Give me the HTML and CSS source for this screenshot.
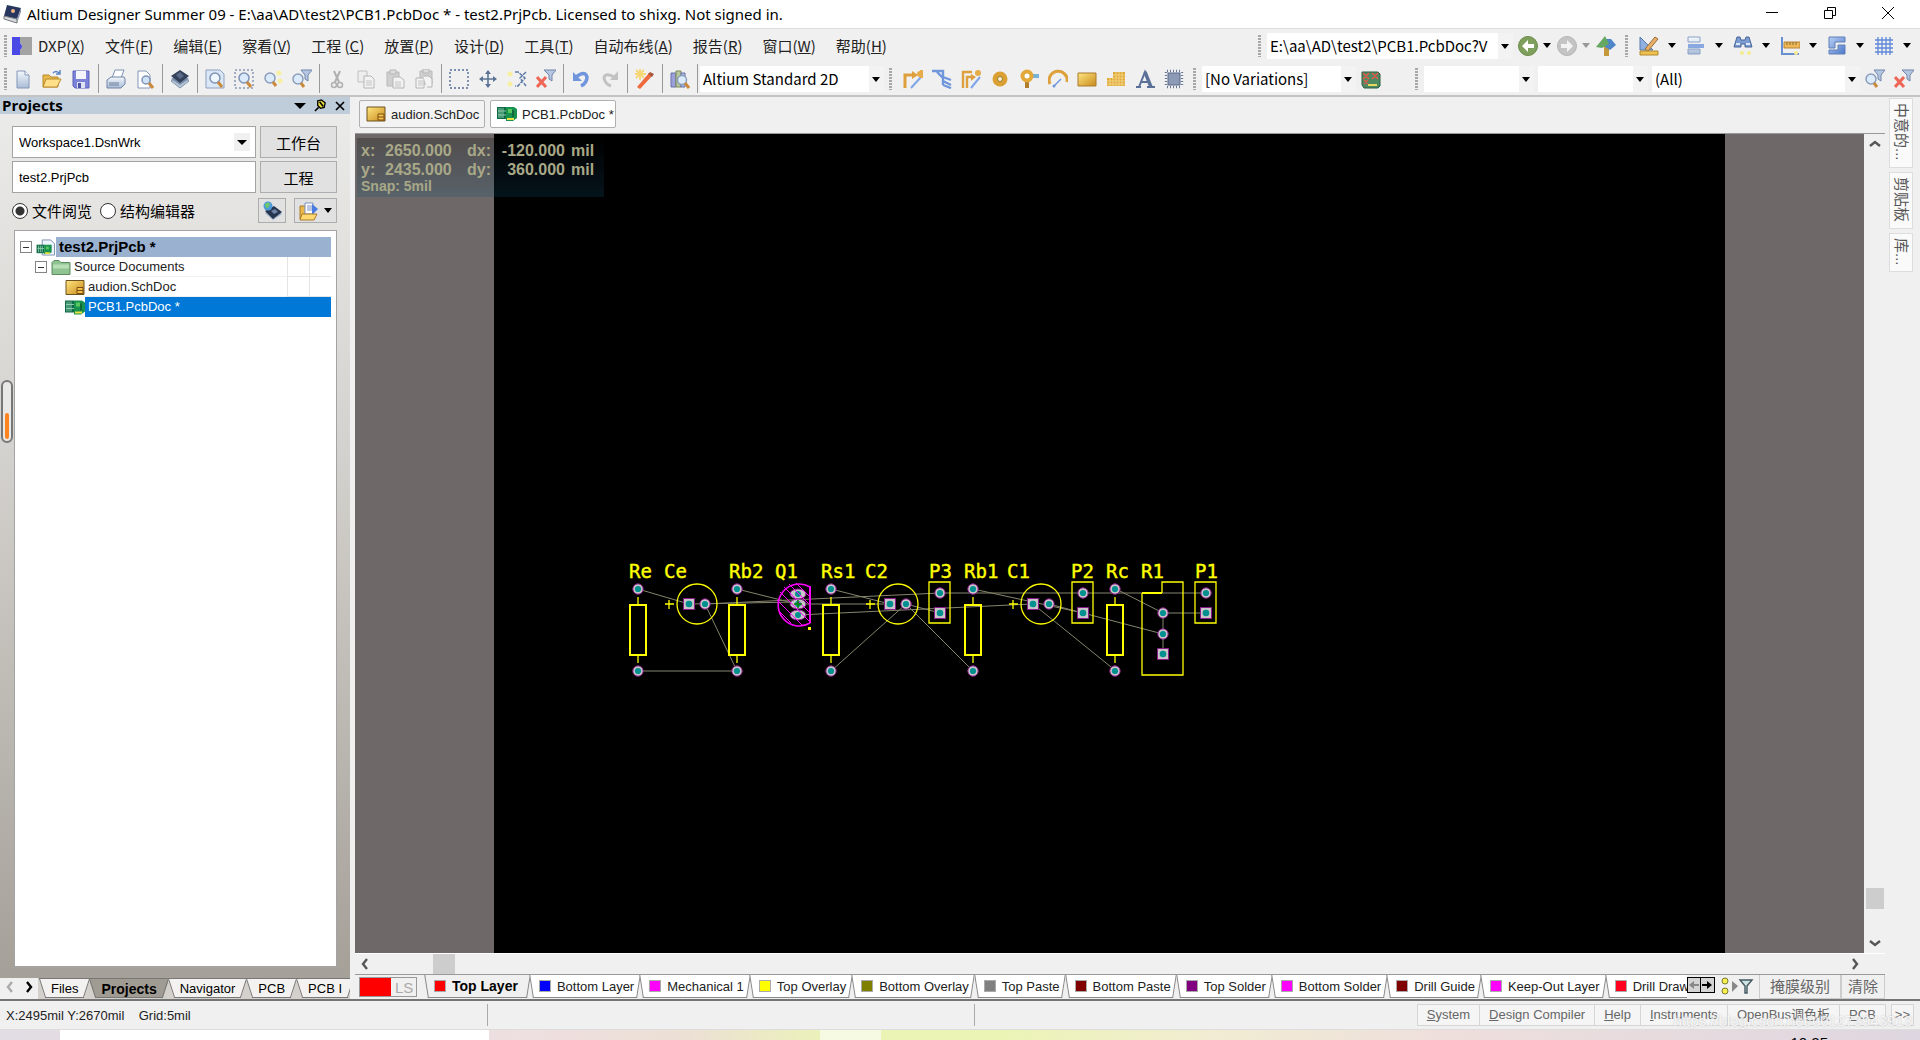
FILE: index.html
```
<!DOCTYPE html>
<html lang="zh-CN">
<head>
    <meta charset="UTF-8">
    <meta name="viewport" content="width=device-width, initial-scale=1.0">
    <title>Altium Designer Summer 09</title>
    <link rel="stylesheet" href="styles.css">
</head>
<body>
    <svg class="sprite" aria-hidden="true">
        <defs>
            <linearGradient id="gold" x1="0" y1="0" x2="1" y2="1"><stop offset="0" stop-color="#ffe680"/><stop offset="1" stop-color="#c98a1c"/></linearGradient>
            <linearGradient id="steel" x1="0" y1="0" x2="0" y2="1"><stop offset="0" stop-color="#f4f8fd"/><stop offset="1" stop-color="#a9bcd6"/></linearGradient>
            <linearGradient id="blue" x1="0" y1="0" x2="1" y2="1"><stop offset="0" stop-color="#b9cff5"/><stop offset="1" stop-color="#4a78c8"/></linearGradient>
        </defs>
        <symbol id="i-app" viewBox="0 0 20 20"><path d="M5 1l14 3-4 11-13-3z" fill="#26365e"/><path d="M2 12l13 3v4L2 15z" fill="#d5dae2" stroke="#777"/><path d="M15 15l4-11v4l-4 11z" fill="#8d96a8"/><circle cx="11" cy="7" r="2" fill="#f2b48a"/></symbol>
        <symbol id="i-dxp" viewBox="0 0 20 20"><path d="M0 1h8v6a4 4 0 0 1 0 7v5H0z" fill="#4b49e6"/><path d="M8 1h12v18H8v-5a4 4 0 0 0 0-7z" fill="#a3a3a3"/></symbol>
        <symbol id="i-new" viewBox="0 0 20 20"><path d="M4 2h8l4 4v13H4z" fill="url(#steel)" stroke="#8296b8"/><path d="M12 2v4h4" fill="#fff" stroke="#8296b8"/></symbol>
        <symbol id="i-open" viewBox="0 0 20 20"><path d="M1 6h6l2 2h7v10H1z" fill="#e8b84a" stroke="#b98a2a"/><path d="M4 10h15l-4 8H1z" fill="#ffe08a" stroke="#b98a2a"/><path d="M11 4q3-3 6 0m1-3v4h-4" fill="none" stroke="#5b86c4" stroke-width="1.5"/></symbol>
        <symbol id="i-save" viewBox="0 0 20 20"><path d="M2 2h16v17H4l-2-2z" fill="#7c83d8" stroke="#5a60b8"/><path d="M5 2h10v8H5z" fill="#f3f5fb"/><path d="M6 13h8v6H6z" fill="#dfe2f0"/><path d="M7 14h3v5H7z" fill="#4d54a8"/></symbol>
        <symbol id="i-print" viewBox="0 0 20 20"><path d="M6 9l3-8h9l-3 8z" fill="#fff" stroke="#7a90b5"/><path d="M1 11l4-3h13l1 2v5l-4 4H1z" fill="url(#steel)" stroke="#7084a6"/><path d="M3 14h10M3 16h10" stroke="#6b7d9c"/></symbol>
        <symbol id="i-preview" viewBox="0 0 20 20"><path d="M3 2h8l4 4v13H3z" fill="#fff" stroke="#8296b8"/><circle cx="11" cy="11" r="4" fill="#cfe2f7" stroke="#7f93b4" stroke-width="1.5"/><path d="M14 14l4 5" stroke="#c98a3c" stroke-width="3"/></symbol>
        <symbol id="i-layers" viewBox="0 0 20 20"><path d="M1 12l9-6 9 6-9 7z" fill="#b9c6d8" stroke="#8296b0"/><path d="M1 10l9-6 9 6-9 6z" fill="#7d90ab"/><path d="M1 7l9-6 9 6-9 7z" fill="#33415a"/><path d="M6 6l4-3 4 4-4 3z" fill="#5b6c88"/></symbol>
        <symbol id="i-zoomdoc" viewBox="0 0 20 20"><path d="M1 1h14l4 4v14H1z" fill="#dbe7f5" stroke="#8ba0c2"/><circle cx="10" cy="9" r="5" fill="#eef6ff" stroke="#7f93b4" stroke-width="1.5"/><path d="M13 13l4 5" stroke="#c98a3c" stroke-width="3"/></symbol>
        <symbol id="i-zoomsel" viewBox="0 0 20 20"><path d="M1 1h18v18H1z" fill="none" stroke="#556c98" stroke-dasharray="2 2"/><circle cx="10" cy="9" r="5" fill="#dcebfb" stroke="#7f93b4" stroke-width="1.5"/><path d="M13 13l4 5" stroke="#c98a3c" stroke-width="3"/></symbol>
        <symbol id="i-zoompts" viewBox="0 0 20 20"><circle cx="7" cy="9" r="5" fill="#dcebfb" stroke="#8b9dbb" stroke-width="1.5"/><path d="M10 13l3 4" stroke="#c98a3c" stroke-width="3"/><circle cx="16" cy="4" r="2.5" fill="#f7f0a0"/><circle cx="17" cy="12" r="2.5" fill="#f7f0a0"/></symbol>
        <symbol id="i-zoomflt" viewBox="0 0 20 20"><circle cx="6" cy="10" r="5" fill="#dcebfb" stroke="#8b9dbb" stroke-width="1.5"/><path d="M9 14l3 4" stroke="#c98a3c" stroke-width="3"/><path d="M9 1h11l-4 5v6l-3-2V6z" fill="#b5c6e0" stroke="#7186ab"/></symbol>
        <symbol id="i-cut" viewBox="0 0 20 20"><path d="M7 2l5 11M13 2L8 13" stroke="#b0b0b0" stroke-width="2"/><circle cx="7" cy="16" r="2.5" fill="none" stroke="#b0b0b0" stroke-width="1.5"/><circle cx="13" cy="16" r="2.500" fill="none" stroke="#b0b0b0" stroke-width="1.5"/></symbol>
        <symbol id="i-copy" viewBox="0 0 20 20"><path d="M2 2h9v11H2z" fill="#eee" stroke="#c0c0c0"/><path d="M8 7h7l3 3v9H8z" fill="#f3f3f3" stroke="#b5b5b5"/><path d="M10 12h6M10 14h6M10 16h6" stroke="#c4c4c4"/></symbol>
        <symbol id="i-paste" viewBox="0 0 20 20"><path d="M2 3h12v14H2z" fill="#d0d0d0" stroke="#b8b8b8"/><path d="M5 1h6v4H5z" fill="#ddd" stroke="#b5b5b5"/><path d="M8 8h7l4 3v8H8z" fill="#f3f3f3" stroke="#b5b5b5"/><path d="M10 13h6M10 15h6M10 17h6" stroke="#c4c4c4"/></symbol>
        <symbol id="i-stamp" viewBox="0 0 20 20"><path d="M6 2h12v13H6z" fill="#d0d0d0" stroke="#b8b8b8"/><path d="M9 0h6v4H9z" fill="#ddd" stroke="#b5b5b5"/><path d="M2 9h8v10H2z" fill="#f3f3f3" stroke="#b5b5b5"/><path d="M9 7h6l3 3v8h-5" fill="#f3f3f3" stroke="#b5b5b5"/><path d="M4 12h5M4 14h5M4 16h5" stroke="#c4c4c4"/></symbol>
        <symbol id="i-select" viewBox="0 0 20 20"><path d="M1 1h18v18H1z" fill="none" stroke="#556c98" stroke-width="1.4" stroke-dasharray="2 2"/></symbol>
        <symbol id="i-move" viewBox="0 0 20 20"><path d="M10 2v16M2 10h16" stroke="#5c7396" stroke-width="1.6"/><path d="M10 1l3 4H7zM10 19l3-4H7zM1 10l4-3v6zM19 10l-4-3v6z" fill="#5c7396"/></symbol>
        <symbol id="i-desel" viewBox="0 0 20 20"><path d="M8 3h3l7 6-7 8H8M19 3l-6 6 6 8" fill="none" stroke="#5f7ba8" stroke-width="1.5" stroke-dasharray="4 1"/><circle cx="3" cy="5" r="2.5" fill="#f7f0a0"/><circle cx="3" cy="15" r="2.5" fill="#f7f0a0"/></symbol>
        <symbol id="i-clrflt" viewBox="0 0 20 20"><path d="M1 8l9 10M10 8L1 18" stroke="#ee6655" stroke-width="3"/><path d="M8 1h12l-4 5v6l-3-2V6z" fill="#b5c6e0" stroke="#7186ab"/></symbol>
        <symbol id="i-undo" viewBox="0 0 20 20"><path d="M5 8q9-7 11 0 0 6-6 9" fill="none" stroke="#6f96dc" stroke-width="3.5"/><path d="M2 3v9h9z" fill="#6f96dc"/></symbol>
        <symbol id="i-redo" viewBox="0 0 20 20"><path d="M14 8Q5 3 4 9q1 6 7 8" fill="none" stroke="#c2c2c2" stroke-width="3"/><path d="M18 2v9h-8z" fill="#c2c2c2"/></symbol>
        <symbol id="i-wand" viewBox="0 0 20 20"><path d="M5 0v11M0 5h11M1 1l8 8M9 1L1 9" stroke="#f7d774" stroke-width="1.8"/><path d="M2 18L14 4l4 2L5 20z" fill="#ee6a3c"/><path d="M13 5l2-2 4 2-2 3z" fill="#a8583c"/></symbol>
        <symbol id="i-books" viewBox="0 0 20 20"><path d="M1 4h5v14H1z" fill="#9aa0d8" stroke="#6a70a8"/><path d="M6 2h5v16H6z" fill="#b8c79a" stroke="#7a8a5c"/><path d="M11 4h4v14h-4z" fill="#a9b8e0" stroke="#6a70a8"/><circle cx="12" cy="11" r="4.5" fill="#dcebfb" stroke="#8b9dbb" stroke-width="1.5"/><path d="M15 14l4 5" stroke="#c98a3c" stroke-width="3"/></symbol>
        <symbol id="i-route" viewBox="0 0 20 20"><path d="M2 19V6h8" fill="none" stroke="#dda03c" stroke-width="3"/><path d="M9 2l6 4-6 4z" fill="#dda03c"/><path d="M8 19L18 8" stroke="#7fa5e8" stroke-width="2"/><path d="M17 1h3v8h-3z" fill="#e5ac48"/><circle cx="17" cy="5" r="3" fill="#e5ac48"/></symbol>
        <symbol id="i-multi" viewBox="0 0 20 20"><path d="M0 2h11v14M5 3l6 6M11 8l8 3M11 12l8 4M11 16l8 3" fill="none" stroke="#7096dc" stroke-width="2.4"/></symbol>
        <symbol id="i-diff" viewBox="0 0 20 20"><path d="M2 19V3h9M6 19V8h5" fill="none" stroke="#dda03c" stroke-width="2.4"/><path d="M10 5l5 3-5 4z" fill="#dda03c"/><path d="M10 19L19 8" stroke="#7fa5e8" stroke-width="2"/><circle cx="17" cy="4" r="3" fill="#e5ac48"/></symbol>
        <symbol id="i-pad" viewBox="0 0 20 20"><circle cx="10" cy="10" r="5" fill="#fff3cf" stroke="#daa032" stroke-width="5"/><circle cx="10" cy="10" r="2.5" fill="#fff3cf" stroke="#9c7328"/></symbol>
        <symbol id="i-via" viewBox="0 0 20 20"><path d="M10 5h10v4H10z" fill="#73b4d8"/><path d="M6 10h4v9H6z" fill="#b07d2c"/><circle cx="8" cy="7" r="4.5" fill="#fff" stroke="#e2a83a" stroke-width="4"/></symbol>
        <symbol id="i-arc" viewBox="0 0 20 20"><path d="M2 15A9 9 0 1 1 19 13" fill="none" stroke="#dda03c" stroke-width="3"/><path d="M6 17l7-7" stroke="#6f96dc" stroke-width="1.5"/><circle cx="6" cy="17" r="1.5" fill="#6f96dc"/></symbol>
        <symbol id="i-fill" viewBox="0 0 20 20"><path d="M1 4h18v13H1z" fill="url(#gold)" stroke="#a97b2c"/></symbol>
        <symbol id="i-poly" viewBox="0 0 20 20"><path d="M7 3h12v14H1V9h6z" fill="#e0a93c"/><path d="M1 12h18M1 15h18M7 6h12M7 9h12M4 9v8M7 9v8M10 3v14M13 3v14M16 3v14" stroke="#f3d27e"/></symbol>
        <symbol id="i-text" viewBox="0 0 20 20"><path d="M1 18h5M12 18h8M4 18L10 3l6 15M6 13h8" fill="none" stroke="#5a7098" stroke-width="2"/><path d="M10 3l6 15" stroke="#5a7098" stroke-width="3.4"/></symbol>
        <symbol id="i-chip" viewBox="0 0 20 20"><path d="M4 4h12v12H4z" fill="#8d9ab5" stroke="#5a6a8c"/><path d="M3 2h14M3 18h14M2 3v14M18 3v14" stroke="#6a7894" stroke-width="2.4" stroke-dasharray="1 2"/></symbol>
        <symbol id="i-variant" viewBox="0 0 20 20"><path d="M1 3h16l2 2v12l-2 2H3l-2-3z" fill="#4d8a62" stroke="#2d5c40"/><path d="M2 4l6 6M8 4l-6 6M11 4l6 6M17 4l-6 6M3 11l4 4M7 11l-4 4" stroke="#e05a4c" stroke-width="1.6"/><path d="M7 15h9v2H7z" fill="#e8d860"/></symbol>
        <symbol id="i-back" viewBox="0 0 20 20"><circle cx="10" cy="10" r="9.5" fill="#7fa05c" stroke="#6a8a48"/><path d="M4 10l6-6v4h6v4h-6v4z" fill="#fff"/></symbol>
        <symbol id="i-fwd" viewBox="0 0 20 20"><circle cx="10" cy="10" r="9.5" fill="#c4c4c4" stroke="#b4b4b4"/><path d="M16 10l-6-6v4H4v4h6v4z" fill="#f3f3f3"/></symbol>
        <symbol id="i-home" viewBox="0 0 20 20"><path d="M8 8h5v12H8z" fill="#c4993c"/><path d="M9 3h6l5 6-6 5-5-3z" fill="#4f86c8"/><path d="M0 11L9 0l4 8-7 4z" fill="#66a862"/></symbol>
        <symbol id="i-draft" viewBox="0 0 20 20"><path d="M1 1v13h13z" fill="#8fb0e0" stroke="#5878b0"/><path d="M6 13L16 1l3 2L9 15z" fill="#e8b06a" stroke="#9a6c34"/><path d="M1 15h18v4H1z" fill="#f0c050" stroke="#b08a30"/></symbol>
        <symbol id="i-align" viewBox="0 0 20 20"><path d="M2 1h12v5H2zM2 13h12v5H2z" fill="url(#steel)" stroke="#8ba0c8"/><path d="M2 8h16v4H2z" fill="#8aa8e0"/></symbol>
        <symbol id="i-find" viewBox="0 0 20 20"><path d="M4 1h3l1 3h4l1-3h3l3 10h-7V8H8v3H1z" fill="#7c9cd0" stroke="#47679c"/><path d="M3 8h4M13 8h4" stroke="#dce8fa" stroke-width="2"/><circle cx="9" cy="17" r="2" fill="#f5ec90"/><circle cx="16" cy="17" r="2" fill="#f5ec90"/></symbol>
        <symbol id="i-dim" viewBox="0 0 20 20"><path d="M2 1v17h17" fill="none" stroke="#6a8fd0" stroke-width="2"/><path d="M4 6h16v6H4z" fill="#eeb858" stroke="#b5853a"/><path d="M7 6v3M10 6v3M13 6v3M16 6v3" stroke="#8d6a2c"/><circle cx="16" cy="17" r="2" fill="#f5ec90"/></symbol>
        <symbol id="i-room" viewBox="0 0 20 20"><path d="M2 1h16v5H8v6H2zM18 18H2v-4h9V9h7z" fill="url(#blue)" stroke="#6080b8"/></symbol>
        <symbol id="i-grid" viewBox="0 0 20 20"><path d="M4 1v18M8 1v18M12 1v18M16 1v18M1 4h18M1 8h18M1 12h18M1 16h18" stroke="#6088d8" stroke-width="1.3"/></symbol>
        <symbol id="i-sch" viewBox="0 0 20 16"><path d="M1 1h18v14H1z" fill="url(#gold)" stroke="#6b5220"/><path d="M12 8h6v6h-6zM12 11h6" fill="#f5c24c" stroke="#7a4c10"/></symbol>
        <symbol id="i-pcb" viewBox="0 0 20 16"><path d="M0 1h9v12H0z" fill="#0f6b45"/><path d="M9 1h8l3 2v9l-4 3H9z" fill="#17924f"/><path d="M2 2v10M4 2v10M6 2v10M1 5h8M1 9h8" stroke="#9fdcc0" stroke-width=".8"/><path d="M11 3h4v4h-4z" fill="#58c85c"/><path d="M10 12h7v2h-7z" fill="#e8e040"/><path d="M16 4v7" stroke="#063f28"/></symbol>
        <symbol id="i-prj" viewBox="0 0 20 18"><path d="M6 1h9l4 4v12H6z" fill="#eef4fb" stroke="#7a8fae"/><path d="M0 6h8v9H0z" fill="#0f6b45"/><path d="M8 6h8v8l-3 2H8z" fill="#17924f"/><path d="M2 7v7M4 7v7M6 7v7M1 10h7" stroke="#9fdcc0" stroke-width=".8"/><path d="M10 8h3v3h-3z" fill="#58c85c"/><path d="M9 14h5v2H9z" fill="#e8e040"/></symbol>
        <symbol id="i-folder" viewBox="0 0 20 16"><path d="M1 3l2-2h5l2 2h9v12H1z" fill="#8fc492" stroke="#5c8c60"/><path d="M2 5h16v4H2z" fill="#b7deb5"/></symbol>
        <symbol id="i-globe" viewBox="0 0 20 20"><path d="M3 12l9-5 8 6-9 6z" fill="#9fb2c8"/><path d="M3 10l9-5 8 6-9 7z" fill="#26344e"/><path d="M9 10l4-2 3 3-4 2z" fill="#6f84a8"/><circle cx="6" cy="5" r="4.5" fill="#4f9ad8"/><path d="M3 3q4-3 5 0l-2 4q-3 0-3-4z" fill="#6cc86a"/></symbol>
        <symbol id="i-docopen" viewBox="0 0 20 20"><path d="M1 5h6v13H1z" fill="#e8b84a" stroke="#a97b2c"/><path d="M6 2h8v11H6z" fill="#fff" stroke="#7a8fc0"/><path d="M8 5h5M8 7h5M8 9h5" stroke="#7a8fc0"/><path d="M13 3l6 5-6 6z" fill="#4a7be0"/><path d="M3 13h15l-3 6H1z" fill="#ffd870" stroke="#a97b2c"/></symbol>
        <symbol id="i-pin" viewBox="0 0 14 14"><path d="M4 2l4-1 4 3-1 5-4 1-3-3z" fill="#e8dc3c" stroke="#000" stroke-width="1.4"/><path d="M5 9l-4 4M6 3l4 5" stroke="#000" stroke-width="1.6"/></symbol>
        <symbol id="i-x" viewBox="0 0 12 12"><path d="M2 2l8 8M10 2l-8 8" stroke="#000" stroke-width="1.7"/></symbol>
        <symbol id="i-left" viewBox="0 0 10 12"><path d="M7 1L3 6l4 5" fill="none" stroke="currentColor" stroke-width="2.4"/></symbol>
        <symbol id="i-right" viewBox="0 0 10 12"><path d="M3 1l4 5-4 5" fill="none" stroke="currentColor" stroke-width="2.4"/></symbol>
        <symbol id="i-up" viewBox="0 0 12 10"><path d="M1 7l5-4 5 4" fill="none" stroke="currentColor" stroke-width="2.4"/></symbol>
        <symbol id="i-down" viewBox="0 0 12 10"><path d="M1 3l5 4 5-4" fill="none" stroke="currentColor" stroke-width="2.4"/></symbol>
        <symbol id="i-prev" viewBox="0 0 10 10"><path d="M0 5l5-4v3h5v2H5v3z" fill="currentColor"/></symbol>
        <symbol id="i-next" viewBox="0 0 10 10"><path d="M10 5L5 1v3H0v2h5v3z" fill="currentColor"/></symbol>
        <symbol id="i-mask" viewBox="0 0 34 18"><circle cx="5" cy="4" r="3" fill="#f7f050" stroke="#777a30"/><circle cx="5" cy="14" r="3" fill="#f7f050" stroke="#777a30"/><path d="M12 4l6 5-6 6z" fill="#888"/><path d="M20 3h12l-5 6v7h-2V9z" fill="#cfe4e0" stroke="#405860" stroke-width="1.4"/></symbol>

        <!-- footprints, origin at the first pad -->
        <symbol id="resistor" overflow="visible">
            <path class="silk" d="M0 8v8M0 66v8"/>
            <path class="silk thick" d="M-8 16h16v50h-16z"/>
            <use href="#pad"/>
            <use href="#pad" y="82"/>
        </symbol>
        <symbol id="pad" overflow="visible"><circle r="5.2" class="ring"/><circle r="3.1" class="hole"/></symbol>
        <symbol id="pad-square" overflow="visible"><path class="ring" d="M-5.5-5.5h11v11h-11z"/><circle r="3.3" class="hole"/></symbol>
        <symbol id="capacitor" overflow="visible">
            <circle class="silk" cx="8" r="20"/>
            <path class="silk" d="M-24 0h9M-20-4v9"/>
            <use href="#pad-square"/>
            <use href="#pad" x="16"/>
        </symbol>
        <symbol id="header" overflow="visible">
            <path class="silk" d="M-11-11h21v41h-21z"/>
            <use href="#pad"/>
            <use href="#pad-square" y="20"/>
        </symbol>
    </svg>

    <header class="titlebar">
        <svg class="icon"><use href="#i-app"/></svg>
        <h1>Altium Designer Summer 09 - E:\aa\AD\test2\PCB1.PcbDoc * - test2.PrjPcb. Licensed to shixg. Not signed in.</h1>
        <div class="window-buttons">
            <button aria-label="Minimize"><svg viewBox="0 0 14 14"><path d="M1 6.500h12"/></svg></button>
            <button aria-label="Restore"><svg viewBox="0 0 14 14"><path d="M1.500 4.500h8v8h-8zM4.500 4V1.500h8v8H10"/></svg></button>
            <button aria-label="Close"><svg viewBox="0 0 14 14"><path d="M1 1l12 12M13 1L1 13"/></svg></button>
        </div>
    </header>

    <div class="bar menubar">
        <span class="grip first"></span>
        <nav class="menus">
            <button><svg class="icon"><use href="#i-dxp"/></svg>DXP(<u>X</u>)</button>
            <button>文件(<u>F</u>)</button>
            <button>编辑(<u>E</u>)</button>
            <button>察看(<u>V</u>)</button>
            <button>工程 (<u>C</u>)</button>
            <button>放置(<u>P</u>)</button>
            <button>设计(<u>D</u>)</button>
            <button>工具(<u>T</u>)</button>
            <button>自动布线(<u>A</u>)</button>
            <button>报告(<u>R</u>)</button>
            <button>窗口(<u>W</u>)</button>
            <button>帮助(<u>H</u>)</button>
        </nav>
        <span class="grip"></span>
        <div class="combo address"><select aria-label="Address"><option>E:\aa\AD\test2\PCB1.PcbDoc?V</option></select></div>
        <button class="tool" aria-label="Back"><svg class="icon"><use href="#i-back"/></svg></button>
        <button class="drop small" aria-label="Back history"></button>
        <button class="tool" aria-label="Forward"><svg class="icon"><use href="#i-fwd"/></svg></button>
        <button class="drop small off" aria-label="Forward history"></button>
        <button class="tool" aria-label="Home"><svg class="icon"><use href="#i-home"/></svg></button>
        <span class="grip"></span>
        <button class="tool" aria-label="Utility tools"><svg class="icon"><use href="#i-draft"/></svg></button><button class="drop" aria-label="More utility tools"></button>
        <button class="tool" aria-label="Align"><svg class="icon"><use href="#i-align"/></svg></button><button class="drop" aria-label="More align tools"></button>
        <button class="tool" aria-label="Find selections"><svg class="icon"><use href="#i-find"/></svg></button><button class="drop" aria-label="More find tools"></button>
        <button class="tool" aria-label="Dimensions"><svg class="icon"><use href="#i-dim"/></svg></button><button class="drop" aria-label="More dimensions"></button>
        <button class="tool" aria-label="Rooms"><svg class="icon"><use href="#i-room"/></svg></button><button class="drop" aria-label="More rooms"></button>
        <button class="tool" aria-label="Grids"><svg class="icon"><use href="#i-grid"/></svg></button><button class="drop" aria-label="More grids"></button>
    </div>

    <div class="bar toolbar">
        <span class="grip first"></span>
        <button class="tool" aria-label="New"><svg class="icon"><use href="#i-new"/></svg></button>
        <button class="tool" aria-label="Open"><svg class="icon"><use href="#i-open"/></svg></button>
        <button class="tool" aria-label="Save"><svg class="icon"><use href="#i-save"/></svg></button>
        <span class="sep"></span>
        <button class="tool" aria-label="Print"><svg class="icon"><use href="#i-print"/></svg></button>
        <button class="tool" aria-label="Preview"><svg class="icon"><use href="#i-preview"/></svg></button>
        <span class="sep"></span>
        <button class="tool" aria-label="Devices"><svg class="icon"><use href="#i-layers"/></svg></button>
        <span class="sep"></span>
        <button class="tool" aria-label="Fit document"><svg class="icon"><use href="#i-zoomdoc"/></svg></button>
        <button class="tool" aria-label="Zoom area"><svg class="icon"><use href="#i-zoomsel"/></svg></button>
        <button class="tool" aria-label="Zoom selected"><svg class="icon"><use href="#i-zoompts"/></svg></button>
        <button class="tool" aria-label="Zoom filtered"><svg class="icon"><use href="#i-zoomflt"/></svg></button>
        <span class="sep"></span>
        <button class="tool" aria-label="Cut"><svg class="icon"><use href="#i-cut"/></svg></button>
        <button class="tool" aria-label="Copy"><svg class="icon"><use href="#i-copy"/></svg></button>
        <button class="tool" aria-label="Paste"><svg class="icon"><use href="#i-paste"/></svg></button>
        <button class="tool" aria-label="Rubber stamp"><svg class="icon"><use href="#i-stamp"/></svg></button>
        <span class="sep"></span>
        <button class="tool" aria-label="Select area"><svg class="icon"><use href="#i-select"/></svg></button>
        <button class="tool" aria-label="Move"><svg class="icon"><use href="#i-move"/></svg></button>
        <button class="tool" aria-label="Deselect"><svg class="icon"><use href="#i-desel"/></svg></button>
        <button class="tool" aria-label="Clear filter"><svg class="icon"><use href="#i-clrflt"/></svg></button>
        <span class="sep"></span>
        <button class="tool" aria-label="Undo"><svg class="icon"><use href="#i-undo"/></svg></button>
        <button class="tool" aria-label="Redo"><svg class="icon"><use href="#i-redo"/></svg></button>
        <span class="sep"></span>
        <button class="tool" aria-label="Cross probe"><svg class="icon"><use href="#i-wand"/></svg></button>
        <span class="sep"></span>
        <button class="tool" aria-label="Browse components"><svg class="icon"><use href="#i-books"/></svg></button>
        <span class="sep"></span>
        <div class="combo view"><select aria-label="View configuration"><option>Altium Standard 2D</option></select></div>
        <span class="grip"></span>
        <button class="tool" aria-label="Route"><svg class="icon"><use href="#i-route"/></svg></button>
        <button class="tool" aria-label="Multi route"><svg class="icon"><use href="#i-multi"/></svg></button>
        <button class="tool" aria-label="Differential route"><svg class="icon"><use href="#i-diff"/></svg></button>
        <button class="tool" aria-label="Pad"><svg class="icon"><use href="#i-pad"/></svg></button>
        <button class="tool" aria-label="Via"><svg class="icon"><use href="#i-via"/></svg></button>
        <button class="tool" aria-label="Arc"><svg class="icon"><use href="#i-arc"/></svg></button>
        <button class="tool" aria-label="Fill"><svg class="icon"><use href="#i-fill"/></svg></button>
        <button class="tool" aria-label="Polygon"><svg class="icon"><use href="#i-poly"/></svg></button>
        <button class="tool" aria-label="String"><svg class="icon"><use href="#i-text"/></svg></button>
        <button class="tool" aria-label="Component"><svg class="icon"><use href="#i-chip"/></svg></button>
        <span class="grip"></span>
        <div class="combo variations"><select aria-label="Variations"><option>[No Variations]</option></select></div>
        <button class="tool" aria-label="Variants"><svg class="icon"><use href="#i-variant"/></svg></button>
        <span class="grip filter-grip"></span>
        <div class="filters">
            <div class="combo"><select aria-label="Net"><option></option></select></div>
            <div class="combo"><select aria-label="Component"><option></option></select></div>
            <div class="combo wide"><select aria-label="Filter"><option>(All)</option></select></div>
        </div>
        <button class="tool" aria-label="Apply filter"><svg class="icon"><use href="#i-zoomflt"/></svg></button>
        <button class="tool" aria-label="Clear current filter"><svg class="icon"><use href="#i-clrflt"/></svg></button>
    </div>

    <main class="workspace">
        <aside class="panel">
            <div class="panel-head">
                <h2>Projects</h2>
                <button class="drop" aria-label="Panel menu"></button>
                <button aria-label="Pin"><svg class="pin"><use href="#i-pin"/></svg></button>
                <button aria-label="Close panel"><svg class="cross"><use href="#i-x"/></svg></button>
            </div>
            <div class="panel-body">
                <div class="fields">
                    <div class="combo boxed"><select aria-label="Workspace"><option>Workspace1.DsnWrk</option></select></div>
                    <button class="push">工作台</button>
                    <input type="text" value="test2.PrjPcb" aria-label="Project">
                    <button class="push">工程</button>
                </div>
                <div class="modes">
                    <label><input type="radio" name="mode" checked>文件阅览</label>
                    <label><input type="radio" name="mode">结构编辑器</label>
                    <button class="push mini" aria-label="Refresh"><svg class="icon"><use href="#i-globe"/></svg></button>
                    <button class="push mini more" aria-label="Open document"><svg class="icon"><use href="#i-docopen"/></svg></button>
                </div>
                <ul class="tree">
                    <li class="level-0"><span class="toggle"></span><svg><use href="#i-prj"/></svg><span class="name">test2.PrjPcb *</span></li>
                    <li class="level-1"><span class="toggle"></span><svg><use href="#i-folder"/></svg><span class="name">Source Documents</span><i></i><i></i></li>
                    <li class="level-2"><svg><use href="#i-sch"/></svg><span class="name">audion.SchDoc</span><i></i><i></i></li>
                    <li class="level-2 selected"><svg><use href="#i-pcb"/></svg><span class="name">PCB1.PcbDoc *</span></li>
                </ul>
            </div>
            <div class="panel-tabs">
                <button class="arrow off" aria-label="Previous"><svg><use href="#i-left"/></svg></button>
                <button class="arrow" aria-label="Next"><svg><use href="#i-right"/></svg></button>
                <button class="tab">Files</button>
                <button class="tab active">Projects</button>
                <button class="tab">Navigator</button>
                <button class="tab">PCB</button>
                <button class="tab">PCB I</button>
            </div>
            <div class="meter"><span></span></div>
        </aside>

        <section class="document">
            <div class="doc-tabs">
                <button><svg><use href="#i-sch"/></svg>audion.SchDoc</button>
                <button class="active"><svg><use href="#i-pcb"/></svg>PCB1.PcbDoc *</button>
            </div>
            <div class="editor">
                <div class="canvas">
                    <div class="sheet"></div>
                    <div class="hud">
                        <span>x:</span><b>2650.000</b><span>dx:</span><b>-120.000</b><span>mil</span>
                        <span>y:</span><b>2435.000</b><span>dy:</span><b>360.000</b><span>mil</span>
                        <small>Snap: 5mil</small>
                    </div>
                    <svg class="board" viewBox="0 0 600 130">
                        <path class="net" d="M18 29L69 44M69 44L177 42M85 44L320 33H586M85 44L117 111M18 111H117M117 29L177 44M177 44H270M177 55L412 44M211 29L270 44M211 111L286 44L353 111M286 44L320 53M353 29L463 53M429 44L463 53M413 44L496 111M463 53L543 74M496 29L543 53H586M543 53V95"/>
                        <g>
                            <use href="#resistor" x="18" y="29"/>
                            <use href="#resistor" x="117" y="29"/>
                            <use href="#resistor" x="211" y="29"/>
                            <use href="#resistor" x="353" y="29"/>
                            <use href="#resistor" x="495" y="29"/>
                            <use href="#capacitor" x="69" y="44"/>
                            <use href="#capacitor" x="270" y="44"/>
                            <use href="#capacitor" x="413" y="44"/>
                            <use href="#header" x="320" y="33"/>
                            <use href="#header" x="463" y="33"/>
                            <use href="#header" x="586" y="33"/>
                        </g>
                        <g class="transistor">
                            <ellipse class="ring" cx="178" cy="34" rx="8" ry="5"/><ellipse class="ring" cx="178" cy="44" rx="8" ry="5"/><ellipse class="ring" cx="178" cy="55" rx="8" ry="5"/>
                            <circle class="hole" cx="178" cy="34" r="3"/><circle class="hole" cx="178" cy="44" r="3"/><circle class="hole" cx="178" cy="55" r="3"/>
                            <path class="outline" d="M190 27A21 21 0 1 0 190 63"/>
                            <path class="outline flat" d="M190 26v37"/>
                            <path class="hatch" d="M157 40l26 26M158 50l13 13M160 32l30 30M164 27l26 26M169 24l21 21M176 23l14 14"/>
                            <path class="origin" d="M174 44h8M178 40v8"/>
                            <path class="dot" d="M188 67h3v3h-3z"/>
                        </g>
                        <path class="silk" d="M522 33V115H563V22H542V33"/>
                        <path class="silk thick" d="M522 33h20"/>
                        <use href="#pad" x="543" y="53"/>
                        <use href="#pad" x="543" y="74"/>
                        <use href="#pad-square" x="543" y="94"/>
                        <g class="labels">
                            <text x="9" y="18">Re</text><text x="44" y="18">Ce</text><text x="109" y="18">Rb2</text>
                            <text x="155" y="18">Q1</text><text x="201" y="18">Rs1</text><text x="245" y="18">C2</text>
                            <text x="309" y="18">P3</text><text x="344" y="18">Rb1</text><text x="387" y="18">C1</text>
                            <text x="451" y="18">P2</text><text x="486" y="18">Rc</text><text x="521" y="18">R1</text><text x="575" y="18">P1</text>
                        </g>
                    </svg>
                </div>
                <div class="scroll vertical">
                    <button aria-label="Scroll up"><svg><use href="#i-up"/></svg></button>
                    <span class="thumb"></span>
                    <button aria-label="Scroll down"><svg><use href="#i-down"/></svg></button>
                </div>
            </div>
            <div class="scroll horizontal">
                <button aria-label="Scroll left"><svg><use href="#i-left"/></svg></button>
                <span class="thumb"></span>
                <button aria-label="Scroll right"><svg><use href="#i-right"/></svg></button>
            </div>
            <div class="layers">
                <button class="layer-set"><span></span>LS</button>
                <div class="layer-tabs">
                    <button class="tab active"><i class="red"></i>Top Layer</button>
                    <button class="tab"><i class="blue"></i>Bottom Layer</button>
                    <button class="tab"><i class="magenta"></i>Mechanical 1</button>
                    <button class="tab"><i class="yellow"></i>Top Overlay</button>
                    <button class="tab"><i class="olive"></i>Bottom Overlay</button>
                    <button class="tab"><i class="gray"></i>Top Paste</button>
                    <button class="tab"><i class="maroon"></i>Bottom Paste</button>
                    <button class="tab"><i class="purple"></i>Top Solder</button>
                    <button class="tab"><i class="magenta"></i>Bottom Solder</button>
                    <button class="tab"><i class="maroon"></i>Drill Guide</button>
                    <button class="tab"><i class="magenta"></i>Keep-Out Layer</button>
                    <button class="tab"><i class="crimson"></i>Drill Draw</button>
                </div>
                <div class="stepper">
                    <button class="off" aria-label="Previous layers"><svg><use href="#i-prev"/></svg></button>
                    <button aria-label="Next layers"><svg><use href="#i-next"/></svg></button>
                </div>
                <button class="mask-icon" aria-label="Mask"><svg><use href="#i-mask"/></svg></button>
                <button class="mask">掩膜级别</button>
                <button class="mask">清除</button>
            </div>
        </section>

        <nav class="side-tabs">
            <button>中意的...</button>
            <button>剪贴板</button>
            <button>库...</button>
        </nav>
    </main>

    <footer class="statusbar">
        <span class="coords">X:2495mil Y:2670mil &nbsp;&nbsp; Grid:5mil</span>
        <span class="hint"></span>
        <span class="hint"></span>
        <div class="panels">
            <button><u>S</u>ystem</button>
            <button><u>D</u>esign Compiler</button>
            <button><u>H</u>elp</button>
            <button><u>I</u>nstruments</button>
            <button>OpenBus调色板</button>
            <button><u>P</u>CB</button>
        </div>
        <button class="expand">&gt;&gt;</button>
        <span class="watermark">https://blog.csdn.net/u01273943913</span>
    </footer>
    <div class="taskbar"><span class="search"></span><span class="task"></span><time>10:25</time></div>
</body>
</html>
```
FILE: styles.css
```
* {
    box-sizing: border-box;
    margin: 0;
    padding: 0;
}

body {
    display: flex;
    flex-direction: column;
    height: 100vh;
    overflow: hidden;
    background-color: #f0f0f0;
    color: #000;
    font-family: "Liberation Sans", "Noto Sans CJK SC", sans-serif;
    font-size: 13px;
}

button, input, select {
    font: inherit;
    color: inherit;
    border: none;
    background: none;
    border-radius: 0;
}

button {
    white-space: nowrap;
}

.sprite {
    position: absolute;
    width: 0;
    height: 0;
}

.icon {
    width: 20px;
    height: 20px;
    flex: none;
}

/* Title bar */
.titlebar {
    display: flex;
    align-items: center;
    height: 29px;
    flex: none;
    padding-left: 2px;
    background-color: #fff;
    border-bottom: 1px solid #d9dddd;
}

.titlebar h1 {
    flex: 1;
    margin-left: 5px;
    font-family: "Noto Sans", sans-serif;
    font-size: 15px;
    font-weight: 400;
    line-height: 20px;
    white-space: nowrap;
}

.window-buttons {
    display: flex;
    margin-right: 3px;
}

.window-buttons button {
    width: 58px;
    height: 28px;
}

.window-buttons svg {
    width: 14px;
    height: 14px;
    fill: none;
    stroke: #000;
}

/* Menu and tool bars */
.bar {
    display: flex;
    align-items: center;
    flex: none;
    height: 33px;
    background-color: #f0f0f0;
    font-family: "Noto Sans CJK SC", sans-serif;
    font-size: 15px;
}

.menubar {
    padding-right: 4px;
}

.menus {
    display: flex;
    flex: 1;
    gap: 20px;
    padding-left: 4px;
}

.menus button {
    display: flex;
    align-items: center;
    color: #222;
}

.menus .icon {
    margin-right: 6px;
}

.toolbar {
    height: 35px;
    border-bottom: 2px solid #c3c3c3;
}

.grip {
    flex: none;
    width: 14px;
    height: 22px;
    background: repeating-linear-gradient(#a8a8a8 0 2px, transparent 2px 3px) 5px 0 / 3px 100% no-repeat;
}

.grip.first {
    width: 8px;
    background-position-x: 4px;
}

.filter-grip {
    margin-left: 25px;
}

.tool {
    display: flex;
    align-items: center;
    justify-content: center;
    flex: none;
    width: 29px;
    height: 28px;
}

.sep {
    flex: none;
    width: 6px;
    height: 29px;
    background: linear-gradient(#999, #999) 3px 0 / 1px 100% no-repeat;
}

.drop {
    display: flex;
    align-items: center;
    justify-content: center;
    flex: none;
    width: 18px;
    height: 28px;
}

.drop.small {
    width: 10px;
}

.drop::before, .combo::after {
    content: '';
    border: 4px solid transparent;
    border-top: 5px solid #000;
    border-bottom: none;
}

.drop.off::before {
    border-top-color: #999;
}

.combo {
    position: relative;
    flex: none;
    height: 26px;
}

.combo::after {
    position: absolute;
    right: 4px;
    top: 11px;
    pointer-events: none;
}

.combo select {
    display: block;
    appearance: none;
    width: 100%;
    height: 100%;
    padding: 0 16px 0 3px;
    background: linear-gradient(#f3f3f3, #f3f3f3) right / 15px 100% no-repeat #fff;
}

.address {
    width: 246px;
}

.view {
    width: 184px;
}

.variations {
    width: 154px;
}

.filters {
    display: flex;
    flex: 1;
    gap: 4px;
}

.filters .combo {
    width: 110px;
}

.filters .wide {
    flex: 1;
}

.toolbar .tool:last-child {
    margin-right: 2px;
}

/* Work area */
.workspace {
    display: flex;
    flex: 1;
    min-height: 0;
    border-bottom: 2px solid #757575;
}

.panel {
    position: relative;
    display: flex;
    flex-direction: column;
    flex: none;
    width: 350px;
    background: linear-gradient(#ececea, #d3d1cd 40%, #a39e96);
}

.panel-head {
    display: flex;
    align-items: center;
    height: 17px;
    padding-left: 2px;
    background-color: #bfcddb;
}

.panel-head h2 {
    flex: 1;
    font-family: "Open Sans", sans-serif;
    font-size: 15px;
    font-weight: 700;
    line-height: 17px;
}

.panel-head .drop::before {
    border-width: 6px 6px 0;
}

.panel-head button {
    height: 17px;
    width: 20px;
    display: flex;
    align-items: center;
    justify-content: center;
}

.pin {
    width: 13px;
    height: 13px;
}

.cross {
    width: 12px;
    height: 12px;
}

.panel-body {
    display: flex;
    flex-direction: column;
    flex: 1;
    gap: 5px;
    padding: 12px 13px 11px 12px;
}

.fields {
    display: grid;
    grid-template-columns: 1fr 77px;
    gap: 3px 4px;
}

.fields input {
    min-width: 0;
    height: 32px;
    padding: 0 6px;
    background-color: #fff;
    border: 1px solid #a3a3a3;
}

.boxed {
    height: 32px;
    border: 1px solid #a3a3a3;
    background-color: #fff;
}

.boxed select {
    padding-left: 6px;
    background: linear-gradient(#f0f0f0, #f0f0f0) right 5px center / 16px 18px no-repeat #fff;
}

.boxed::after {
    right: 8px;
    top: 13px;
    border-width: 5px 5px 0;
}

.push {
    background-color: #e1e1e1;
    border: 1px solid #adadad;
    font-size: 15px;
}

.modes {
    display: flex;
    align-items: center;
    gap: 8px;
    font-size: 15px;
}

.modes label {
    display: flex;
    align-items: center;
    gap: 4px;
    white-space: nowrap;
}

.modes input {
    appearance: none;
    width: 16px;
    height: 16px;
    border: 1px solid #333;
    border-radius: 50%;
    background-color: #fff;
}

.modes input:checked {
    background: radial-gradient(circle, #333 0 4px, #fff 5px);
}

.mini {
    display: flex;
    align-items: center;
    justify-content: center;
    width: 28px;
    height: 25px;
    margin-left: auto;
}

.more {
    width: 43px;
    margin-left: 0;
    gap: 5px;
}

.more::after {
    content: '';
    border: 4px solid transparent;
    border-top: 5px solid #000;
    border-bottom: none;
}

.tree {
    flex: 1;
    margin: 2px 0 0 2px;
    padding: 6px 5px;
    background-color: #fff;
    border: 1px solid #a3a3a3;
    list-style: none;
}

.tree li {
    display: flex;
    align-items: center;
    height: 20px;
    line-height: 20px;
    color: #222;
}

.tree svg {
    width: 20px;
    height: 17px;
    flex: none;
}

.toggle {
    flex: none;
    width: 12px;
    height: 12px;
    margin-right: 4px;
    border: 1px solid #848484;
    background: linear-gradient(#333, #333) center / 6px 1px no-repeat;
}

.name {
    flex: 1;
    padding-left: 3px;
}

.tree i {
    align-self: stretch;
    width: 22px;
    border-left: 1px solid #e4e4e4;
    border-bottom: 1px solid #e4e4e4;
}

.level-0 .name {
    background-color: #9ab2d0;
    font-size: 15px;
    font-weight: 700;
    color: #000;
}

.level-1 {
    padding-left: 15px;
}

.level-1 .name, .level-2 .name {
    border-bottom: 1px solid #f0f0f0;
    height: 20px;
}

.level-2 {
    padding-left: 45px;
}

.level-2.selected .name {
    background-color: #0078d7;
    border-color: #0078d7;
    color: #fff;
}

.panel-tabs {
    display: flex;
    height: 21px;
    flex: none;
    overflow: hidden;
    background-color: #d4d1cc;
}

.arrow {
    flex: none;
    width: 19px;
    background-color: #f0f0f0;
}

.arrow svg {
    width: 10px;
    height: 12px;
}

.arrow.off {
    color: #aaa;
}

/* Trapezoid tabs: each half is skewed towards the bottom */
.tab {
    position: relative;
    z-index: 0;
    flex: none;
}

.tab::before, .tab::after {
    content: '';
    position: absolute;
    z-index: -1;
    top: 0;
    bottom: 1px;
    background-color: #fff;
    border: 1px solid #777;
}

.tab::before {
    left: 0;
    right: 40%;
    border-right: none;
    transform: skewX(18deg);
}

.tab::after {
    left: 40%;
    right: 0;
    border-left: none;
    transform: skewX(-18deg);
}

.panel-tabs .tab {
    margin: 0 1px 0 4px;
    padding: 0 9px;
}

.panel-tabs .tab::before, .panel-tabs .tab::after {
    background-color: #f3f2f0;
}

.panel-tabs .active {
    font-weight: 700;
    font-size: 14px;
}

.panel-tabs .active::before, .panel-tabs .active::after {
    background-color: #a09b93;
}

.meter {
    position: absolute;
    left: 1px;
    top: 283px;
    display: flex;
    align-items: flex-end;
    width: 12px;
    height: 63px;
    padding: 2px;
    border: 2px solid #777;
    border-radius: 6px;
    background-color: #e8e8e6;
}

.meter span {
    flex: 1;
    height: 26px;
    background-color: #ff8420;
    border-radius: 2px;
}

/* Document */
.document {
    display: flex;
    flex-direction: column;
    flex: 1;
    min-width: 0;
    margin-left: 5px;
}

.doc-tabs {
    display: flex;
    gap: 5px;
    flex: none;
    height: 37px;
    padding: 3px 4px 5px;
    border-bottom: 1px solid #999;
}

.doc-tabs button {
    display: flex;
    align-items: center;
    gap: 5px;
    width: 126px;
    padding-left: 6px;
    background-color: #f3f3f3;
    border: 1px solid #b0b0b0;
    border-radius: 2px;
    color: #222;
}

.doc-tabs .active {
    background-color: #fff;
}

.doc-tabs svg {
    width: 20px;
    height: 16px;
    flex: none;
}

.editor {
    display: flex;
    flex: 1;
    min-height: 0;
}

.canvas {
    position: relative;
    flex: 1;
    display: flex;
    overflow: hidden;
    padding: 0 139px;
    background-color: #6e6868;
}

.sheet {
    flex: 1;
    background-color: #000;
}

.hud {
    position: absolute;
    left: 2px;
    top: 4px;
    display: grid;
    grid-template-columns: 18px 76px 28px 64px 34px;
    align-content: start;
    column-gap: 6px;
    width: 247px;
    height: 59px;
    padding: 3px 4px;
    background: linear-gradient(rgba(0, 0, 0, 0.25), rgba(20, 80, 110, 0.25));
    font-size: 16px;
    font-weight: 700;
    line-height: 19px;
    color: #a8a888;
}

.hud b:nth-of-type(even) {
    text-align: right;
}

.hud small {
    grid-column: span 5;
    font-size: 14px;
    line-height: 15px;
}

.board {
    position: absolute;
    left: 265px;
    top: 426px;
    width: 600px;
    height: 130px;
}

.net {
    fill: none;
    stroke: #85856c;
}

.silk {
    fill: none;
    stroke: #ff0;
    stroke-width: 1.3;
}

.silk.thick {
    stroke-width: 2;
}

.ring {
    fill: #c8c4c8;
    stroke: #8a1c8a;
    stroke-width: 1;
}

.hole {
    fill: #009090;
}

.outline, .hatch {
    fill: none;
    stroke: #f0f;
    stroke-width: 1.6;
}

.outline.flat {
    stroke-width: 2;
}

.hatch {
    stroke-width: 1;
}

.origin {
    stroke: #008000;
    stroke-width: 1.4;
}

.dot {
    fill: #ff0;
}

.labels {
    fill: #ff0;
    stroke: #ff0;
    stroke-width: 0.4;
    font-family: "DejaVu Sans Mono", monospace;
    font-size: 19px;
}

/* Scroll bars */
.scroll {
    display: flex;
    flex: none;
    align-items: center;
    background-color: #f0f0f0;
    color: #555;
}

.scroll button {
    display: flex;
    align-items: center;
    justify-content: center;
    width: 20px;
    height: 20px;
}

.scroll svg {
    width: 12px;
    height: 12px;
}

.thumb {
    width: 22px;
    height: 20px;
    background-color: #cdcdcd;
}

.vertical {
    flex-direction: column;
    justify-content: flex-end;
    width: 21px;
}

.vertical button:first-child {
    margin-bottom: auto;
}

.vertical .thumb {
    width: 18px;
    height: 21px;
    margin-bottom: 24px;
}

.horizontal {
    height: 21px;
    border-top: 1px solid #fff;
}

.horizontal .thumb {
    margin-left: 58px;
    margin-right: auto;
}

.horizontal button:last-child {
    margin-right: 20px;
}

/* Layer tabs */
.layers {
    display: flex;
    flex: none;
    height: 25px;
    border-top: 1px solid #999;
}

.layer-set {
    display: flex;
    align-items: center;
    gap: 4px;
    flex: none;
    width: 58px;
    height: 20px;
    margin: 2px 4px 0;
    border: 1px solid #999;
    font-size: 15px;
    color: #aaa;
}

.layer-set span {
    width: 31px;
    height: 18px;
    background-color: #f00;
}

.layer-tabs {
    display: flex;
    flex: 1;
    min-width: 0;
    overflow: hidden;
    padding-left: 3px;
}

.layer-tabs .tab {
    display: flex;
    align-items: center;
    gap: 6px;
    margin: 0 0 0 2px;
    padding: 0 5px 2px 8px;
    color: #222;
}

.layer-tabs .tab::before, .layer-tabs .tab::after {
    top: -1px;
    border-color: #888;
}

.layer-tabs .tab::before {
    transform: skewX(9deg);
}

.layer-tabs .tab::after {
    transform: skewX(-9deg);
}

.layer-tabs .active {
    padding: 0 11px 2px 8px;
    font-size: 14px;
    font-weight: 700;
    color: #000;
}

.layer-tabs .active::before, .layer-tabs .active::after {
    background-color: #f0f0f0;
}

.layer-tabs i {
    width: 12px;
    height: 12px;
    border: 1px solid #aaa;
}

.red { background-color: #f00; }
.blue { background-color: #00f; }
.magenta { background-color: #f0f; }
.yellow { background-color: #ff0; }
.olive { background-color: #808000; }
.gray { background-color: #808080; }
.maroon { background-color: #800000; }
.purple { background-color: #800080; }
.crimson { background-color: #ff0020; }

.stepper {
    display: flex;
    flex: none;
    height: 16px;
    margin-top: 2px;
    border: 1px solid #000;
}

.stepper button {
    display: flex;
    align-items: center;
    justify-content: center;
    width: 13px;
    background-color: #d4d4d4;
}

.stepper svg {
    width: 10px;
    height: 10px;
}

.stepper .off {
    color: #888;
    border-right: 1px solid #000;
}

.mask-icon {
    flex: none;
    width: 44px;
}

.mask-icon svg {
    width: 34px;
    height: 18px;
}

.mask {
    flex: none;
    padding: 0 10px;
    border: 1px solid #ccc;
    border-top: none;
    font-size: 15px;
    line-height: 22px;
    color: #666;
}

.mask:last-child {
    padding: 0 6px;
}

/* Right edge */
.side-tabs {
    display: flex;
    flex-direction: column;
    align-items: flex-start;
    gap: 4px;
    flex: none;
    width: 35px;
    padding: 1px 0 0 4px;
}

.side-tabs button {
    width: 24px;
    padding: 4px 0 6px;
    background-color: #fafafa;
    border: 1px solid #ddd;
    writing-mode: vertical-rl;
    text-orientation: sideways;
    font-size: 15px;
    line-height: 22px;
    color: #555;
}

/* Status bar */
.statusbar {
    position: relative;
    display: flex;
    align-items: center;
    flex: none;
    height: 28px;
    padding: 0 6px;
}

.coords {
    flex: none;
    width: 481px;
    color: #222;
}

.hint {
    flex: none;
    width: 487px;
    height: 22px;
    border-left: 1px solid #aaa;
}

.hint + .hint {
    flex: 1 1 0;
}

.panels {
    display: flex;
}

.panels button, .expand {
    height: 22px;
    padding: 0 9px;
    margin-left: -1px;
    border: 1px solid #d5d5d5;
    background-color: #f5f5f5;
    line-height: 20px;
    color: #666;
}

.expand {
    padding: 0 3px;
    margin-left: 5px;
}

.watermark {
    position: absolute;
    right: 8px;
    bottom: 0;
    font-size: 15px;
    color: rgba(255, 255, 255, 0.8);
    text-shadow: 0 0 2px #bbb;
}

.taskbar {
    display: flex;
    flex: none;
    height: 11px;
    overflow: hidden;
    padding-left: 60px;
    background: linear-gradient(90deg, #e2dce4, #eedfe0 28%, #ece0d4 36%, #ebf4b4 44%, #ebf4b4 52%, #f1ecd2 63%, #eedfdc 75%, #ded6e0);
    border-top: 1px solid #ddd;
}

.search {
    width: 429px;
    background-color: #fff;
}

.task {
    width: 61px;
    margin-left: 331px;
    background-color: #f6fae2;
}

.taskbar time {
    margin: 5px 92px 0 auto;
    font-size: 15px;
    line-height: 15px;
}
```
